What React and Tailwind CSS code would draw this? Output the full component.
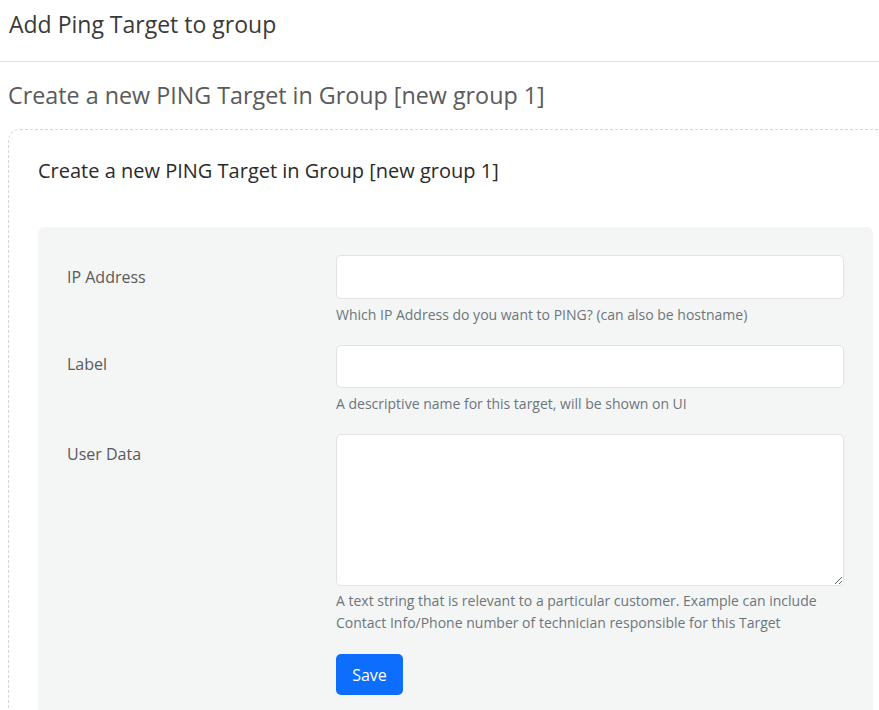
import React from "react";

export default function App() {
  return (
    <div className="min-h-[710px] w-[879px] overflow-hidden bg-white" style={{ fontFamily: "'Open Sans', Lato, sans-serif" }}>
      <div className="flex h-[62px] items-center border-b border-[#e3e3e3] pl-[9px] pb-[14px]">
        <h1 className="text-[23px] leading-[30px] text-[#3a3a3a]">Add Ping Target to group</h1>
      </div>
      <h2 className="mt-[18px] pl-[8px] text-[23.3px] leading-[30px] text-[#5a5a5a]">Create a new PING Target in Group [new group 1]</h2>
      <div className="ml-[8px] mt-[19px] mr-[-20px] rounded-tl-[12px] border border-dashed border-[#d6d6d6] pl-[29px] pr-[26px] pt-[28px]">
        <h3 className="text-[20px] leading-[26px] text-[#2a2a2a]">Create a new PING Target in Group [new group 1]</h3>
        <div className="mt-[43px] rounded-t-[6px] bg-[#f4f5f5] pl-[29px] pr-[29px] pt-[28px] pb-[20px]" style={{ width: 835 }}>
          <div className="flex">
            <label className="w-[269px] pt-[10px] text-[16px] leading-[24px] text-[#5a5a5a]">IP Address</label>
            <div className="w-[508px]">
              <input className="block h-[44px] w-full rounded-[5px] border border-[#e2e2e2] bg-white" />
              <p className="mt-[5px] text-[14px] leading-[21px] text-[#6c757d]">Which IP Address do you want to PING? (can also be hostname)</p>
            </div>
          </div>
          <div className="mt-[20px] flex">
            <label className="w-[269px] pt-[7px] text-[16px] leading-[24px] text-[#5a5a5a]">Label</label>
            <div className="w-[508px]">
              <input className="block h-[43px] w-full rounded-[5px] border border-[#e2e2e2] bg-white" />
              <p className="mt-[5px] text-[14px] leading-[21px] text-[#6c757d]">A descriptive name for this target, will be shown on UI</p>
            </div>
          </div>
          <div className="mt-[20px] flex">
            <label className="w-[269px] pt-[8px] text-[16px] leading-[24px] text-[#5a5a5a]">User Data</label>
            <div className="w-[508px]">
              <textarea className="block h-[152px] w-full rounded-[5px] border border-[#e2e2e2] bg-white" />
              <p className="mt-[4px] text-[14px] leading-[22px] text-[#6c757d]">A text string that is relevant to a particular customer. Example can include Contact Info/Phone number of technician responsible for this Target</p>
              <button className="mt-[20px] h-[41px] w-[67px] rounded-[5px] bg-[#0d6efd] text-[16px] text-white">Save</button>
            </div>
          </div>
        </div>
      </div>
    </div>
  );
}
